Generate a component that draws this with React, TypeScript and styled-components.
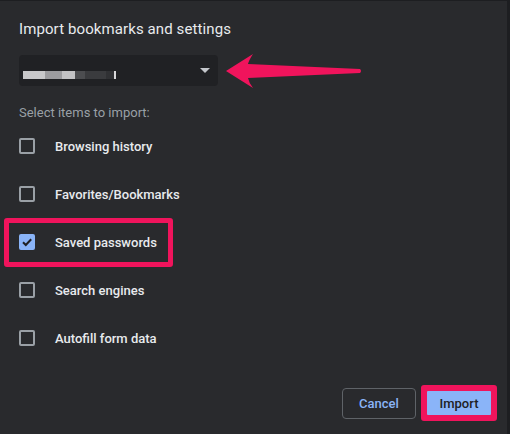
import React from "react";
import styled, { createGlobalStyle } from "styled-components";

const Global = createGlobalStyle`
  html, body { margin: 0; padding: 0; background: #1d1e21; }
  body { font-family: Roboto, "Liberation Sans", Arial, sans-serif; }
  * { box-sizing: border-box; }
`;

const Frame = styled.div`
  width: 510px;
  height: 434px;
  padding: 1px 3px 0 0;
  background: #1d1e21;
`;

const Dialog = styled.div`
  position: relative;
  width: 507px;
  height: 433px;
  background: #292a2d;
  padding: 18px 10px 0 19px;
  display: flex;
  flex-direction: column;
`;

const Title = styled.h1`
  margin: 0;
  font-size: 15px;
  font-weight: 400;
  color: #e8eaed;
  line-height: 20px;
  letter-spacing: 0.1px;
`;

const SelectRow = styled.div`
  margin-top: 16px;
  display: flex;
  align-items: center;
`;

const SelectBox = styled.div`
  width: 199px;
  height: 31px;
  border-radius: 4px;
  background: #202124;
  display: flex;
  align-items: flex-end;
  justify-content: space-between;
  padding: 0 8px 6px 4px;
`;

const Blur = styled.div`
  display: flex;
  height: 8px;
  margin-bottom: 1px;
`;

const BlurSeg = styled.div<{ $w: number; $c: string }>`
  width: ${(p) => p.$w}px;
  height: 100%;
  background: ${(p) => p.$c};
`;

const Caret = styled.div`
  width: 0;
  height: 0;
  border-left: 5px solid transparent;
  border-right: 5px solid transparent;
  border-top: 5px solid #c4c7cc;
  margin-bottom: 7px;
`;

const Subhead = styled.div`
  margin-top: 19px;
  font-size: 13px;
  color: #9aa0a6;
  line-height: 16px;
`;

const List = styled.div`
  margin-top: 1px;
  display: flex;
  flex-direction: column;
`;

const Row = styled.div`
  height: 48px;
  display: flex;
  align-items: center;
  gap: 20px;
`;

const Box = styled.div<{ $checked?: boolean }>`
  width: 16px;
  height: 16px;
  border-radius: 2px;
  border: 2px solid ${(p) => (p.$checked ? "#8ab4f8" : "#9aa0a6")};
  background: ${(p) => (p.$checked ? "#8ab4f8" : "transparent")};
  display: flex;
  align-items: center;
  justify-content: center;
`;

const Label = styled.span`
  font-size: 13px;
  font-weight: 500;
  color: #e8eaed;
`;

const Highlight = styled.div`
  position: absolute;
  left: 4px;
  top: 217px;
  width: 169px;
  height: 49px;
  border: 5px solid #f0145c;
  border-radius: 3px;
  pointer-events: none;
`;

const ArrowSvg = styled.svg`
  position: absolute;
  left: 220px;
  top: 48px;
`;

const Footer = styled.div`
  margin-top: auto;
  margin-bottom: 13px;
  display: flex;
  justify-content: flex-end;
  align-items: center;
  gap: 5px;
`;

const CancelBtn = styled.button`
  width: 74px;
  height: 31px;
  border: 1px solid #5f6368;
  border-radius: 4px;
  background: transparent;
  color: #8ab4f8;
  font-family: inherit;
  font-size: 13px;
  font-weight: 500;
`;

const ImportWrap = styled.div`
  border: 5px solid #f0145c;
  border-radius: 3px;
  padding: 1px;
  background: #f0145c;
`;

const ImportBtn = styled.button`
  width: 64px;
  height: 24px;
  border: none;
  border-radius: 1px;
  background: #8ab4f8;
  color: #202124;
  font-family: inherit;
  font-size: 13px;
  font-weight: 500;
  display: block;
`;

const items = [
  { label: "Browsing history", checked: false },
  { label: "Favorites/Bookmarks", checked: false },
  { label: "Saved passwords", checked: true },
  { label: "Search engines", checked: false },
  { label: "Autofill form data", checked: false },
];

export default function App() {
  return (
    <Frame>
      <Global />
      <Dialog>
        <Title>Import bookmarks and settings</Title>
        <SelectRow>
          <SelectBox>
            <Blur>
              <BlurSeg $w={22} $c="#c8c8ca" />
              <BlurSeg $w={17} $c="#9c9c9f" />
              <BlurSeg $w={13} $c="#c2c2c4" />
              <BlurSeg $w={10} $c="#4c4d50" />
              <BlurSeg $w={21} $c="#3a3b3e" />
              <BlurSeg $w={8} $c="#303134" />
              <BlurSeg $w={2} $c="#d8d8da" />
            </Blur>
            <Caret />
          </SelectBox>
        </SelectRow>
        <Subhead>Select items to import:</Subhead>
        <List>
          {items.map((it) => (
            <Row key={it.label}>
              <Box $checked={it.checked}>
                {it.checked && (
                  <svg width="12" height="12" viewBox="0 0 12 12">
                    <path d="M2 6.2 L4.8 9 L10.2 3.2" fill="none" stroke="#202124" strokeWidth="2" />
                  </svg>
                )}
              </Box>
              <Label>{it.label}</Label>
            </Row>
          ))}
        </List>
        <Footer>
          <CancelBtn>Cancel</CancelBtn>
          <ImportWrap>
            <ImportBtn>Import</ImportBtn>
          </ImportWrap>
        </Footer>
        <Highlight />
        <ArrowSvg width="145" height="45" viewBox="0 0 145 45">
          <path
            d="M6 22 L33 5 Q29 11 28 15 L140 20 Q142 22 140 24 L28 29 Q29 34 33 39 Z"
            fill="#f0145c"
          />
        </ArrowSvg>
      </Dialog>
    </Frame>
  );
}
